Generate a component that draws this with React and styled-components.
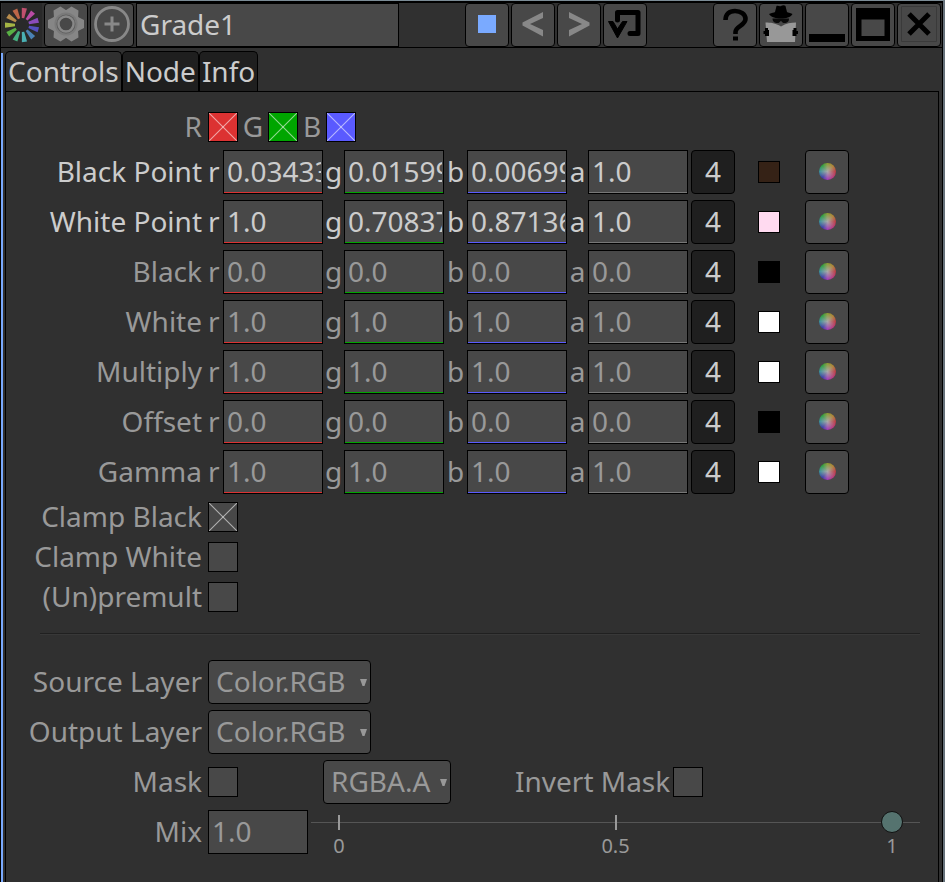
import React, { useState } from "react";
import styled, { createGlobalStyle } from "styled-components";

const c = {
  bg: "#303030",
  field: "#484848",
  dark: "#1f1f1f",
  bright: "#cccccc",
  muted: "#999999",
  red: "#dc3232",
  green: "#00a500",
  blue: "#5a5aff",
  accent: "#7aaaff",
};

const GlobalStyle = createGlobalStyle`
  * { box-sizing: border-box; }
  body { margin: 0; background: ${c.bg}; }
  button, input, select { font: inherit; color: inherit; margin: 0; }
`;

const Window = styled.main`
  display: flex;
  flex-direction: column;
  min-height: 100vh;
  background: ${c.bg};
  color: ${c.muted};
  font-family: "Noto Sans", sans-serif;
  font-size: 28px;
  line-height: 38px;
  border-top: 1px solid #7c8c96;
  border-right: 2px solid #66717a;
  white-space: nowrap;
`;

const Frame = styled.div`
  flex: 1;
  display: flex;
  flex-direction: column;
  border: solid #000;
  border-width: 2px 1px 0 1px;
`;

const Toolbar = styled.header`
  display: flex;
  gap: 2px;
  height: 45px;
  padding: 0 1px;
  border-bottom: 1px solid #000;
`;

const Spacer = styled.div`
  flex: 1;
`;

const Logo = styled.div`
  width: 40px;
  height: 44px;
  background: #292929;
`;

const Button = styled.button`
  display: flex;
  align-items: center;
  justify-content: center;
  width: 44px;
  height: 44px;
  padding: 0 0 2px;
  border: 1px solid #000;
  border-radius: 4px;
  background: ${(p) => (p.$dark ? c.dark : c.field)};
  color: ${c.bright};
`;

const NameField = styled.input`
  flex: 0 1 263px;
  min-width: 80px;
  height: 44px;
  padding: 0 3px 2px;
  border: 1px solid #000;
  border-radius: 0;
  outline: none;
  background: ${c.field};
  && { color: ${c.bright}; }
`;

const Body = styled.div`
  flex: 1;
  display: flex;
`;

const FocusStripe = styled.div`
  width: 2px;
  margin-top: 5px;
  margin-right: 2px;
  background: ${c.accent};
`;

const Column = styled.div`
  flex: 1;
  display: flex;
  flex-direction: column;
  padding-top: 3px;
  padding-right: 3px;
`;

const Tabs = styled.nav`
  display: flex;
`;

const Tab = styled.button`
  height: 40px;
  padding: 0 2px 2px;
  line-height: 36px;
  border: 1px solid #000;
  border-bottom: 0;
  border-radius: 5px 5px 0 0;
  background: ${(p) => (p.$active ? c.bg : c.dark)};
  && { color: ${c.bright}; }
`;

const Panel = styled.section`
  flex: 1;
  padding: 20px 18px 24px 0;
  border: 1px solid #000;
  border-bottom: 0;
`;

const Group = styled.div`
  display: flex;
  flex-direction: column;
  gap: ${(p) => p.$gap}px;
  margin-bottom: ${(p) => p.$after}px;
`;

const Row = styled.div`
  display: flex;
  align-items: center;
  height: ${(p) => (p.$short ? 30 : 44)}px;
  color: ${(p) => (p.$bright ? c.bright : c.muted)};
`;

const Caption = styled.label`
  width: 202px;
  padding: 0 6px 2px 0;
  text-align: right;
`;

const Letter = styled.label`
  width: ${(p) => p.$w}px;
  padding-bottom: 2px;
  text-align: ${(p) => p.$align || "center"};
`;

const NumberField = styled.input`
  width: 100px;
  height: 44px;
  padding: 0 1px 2px 3px;
  border: 1px solid #000;
  border-radius: 0;
  outline: none;
  background: ${c.field};
  box-shadow: ${(p) => (p.$line ? `inset 0 -1px ${p.$line}` : "none")};
`;

const ChannelCount = styled(Button)`
  margin-left: 3px;
`;

const SwatchCell = styled.div`
  display: flex;
  justify-content: center;
  width: 70px;
  padding-right: 2px;
`;

const Swatch = styled.button`
  width: 22px;
  height: 22px;
  padding: 0;
  border: 1px solid #000;
  background: ${(p) => p.$color};
`;

const Wheel = styled.span`
  width: 17px;
  height: 17px;
  border-radius: 50%;
  background:
    radial-gradient(circle, #a8a8a8 0%, #a0a0a000 70%),
    conic-gradient(#8a9a30, #b08030 45deg, #c03840 90deg, #b83880 140deg, #a038b8 180deg, #3838a8 220deg, #38909a 270deg, #28a038 320deg, #8a9a30);
`;

const Check = styled.input`
  appearance: none;
  flex: none;
  width: 30px;
  height: 30px;
  border: 1px solid #000;
  background-color: ${(p) => p.$color || c.field};
  &:checked {
    background-image:
      linear-gradient(to top right, transparent calc(50% - 1px), #ffffff88 50%, transparent calc(50% + 1px)),
      linear-gradient(to bottom right, transparent calc(50% - 1px), #ffffff88 50%, transparent calc(50% + 1px));
  }
`;

const Divider = styled.hr`
  height: 2px;
  margin: 0 0 25px 34px;
  border: 0;
  border-top: 1px solid #202020;
  background: #383838;
`;

const SelectBox = styled.div`
  display: grid;
  align-items: center;
  width: ${(p) => p.$w}px;
  & > * { grid-area: 1 / 1; }
  & > svg { justify-self: end; margin-right: 4px; pointer-events: none; }
`;

const Select = styled.select`
  appearance: none;
  height: 44px;
  padding: 0 12px 2px 7px;
  border: 1px solid #000;
  border-radius: 4px;
  outline: none;
  background: ${c.field};
`;

const MaskCell = styled.div`
  width: 115px;
  display: flex;
`;

const InvertLabel = styled.label`
  margin-left: 64px;
  padding: 0 3px 2px 0;
`;

const Slider = styled.div`
  flex: 1;
  display: grid;
  margin-left: 3px;
  height: 48px;
  background: linear-gradient(#555, #555) 0 14px / 100% 1px no-repeat;
  & > * { grid-area: 1 / 1; }
`;

const Ticks = styled.div`
  display: flex;
  justify-content: space-between;
  padding: 0 8px;
  margin-top: 7px;
`;

const Tick = styled.span`
  width: 40px;
  text-align: center;
  font-size: 20px;
  line-height: 32px;
  &::before {
    content: "";
    display: block;
    width: 2px;
    height: 15px;
    margin: 0 auto;
    background: ${c.muted};
  }
`;

const Range = styled.input`
  appearance: none;
  height: 22px;
  margin: 3px 17px 0 !important;
  background: transparent;
  outline: none;
  z-index: 1;
  &::-webkit-slider-thumb {
    appearance: none;
    width: 22px;
    height: 22px;
    border: 1px solid #101010;
    border-radius: 50%;
    background: #55736f;
  }
`;

const spokes = ["#c0506e", "#b84ba4", "#8a4cbc", "#5450c0", "#4a82b4", "#4ab0b4", "#46b080", "#58b044", "#a4b444", "#b88c4c", "#bc6648"];

function LogoIcon() {
  return (
    <svg width="40" height="44" viewBox="0 0 40 44" aria-hidden="true">
      {spokes.map((color, i) => (
        <path key={color} d="M-1.2 -7 L-2.6 -17 H2.6 L1.2 -7 Z" fill={color} transform={`translate(20 22) rotate(${8 + (i * 360) / 11})`} />
      ))}
    </svg>
  );
}

function Icon({ children }) {
  return <svg width="42" height="42" viewBox="0 0 42 42" fill="none" aria-hidden="true">{children}</svg>;
}

const toothAngles = [0, 60, 120, 180, 240, 300];
const GearIcon = () => (
  <Icon>
    <g transform="translate(21 21)">
      <g fill="#868686">
        <circle r="14" />
        {toothAngles.map((a) => <path key={a} d="M-7.5 -11 L-4 -18 H4 L7.500 -11 Z" transform={`rotate(${a + 30})`} />)}
      </g>
      <circle r="11.500" fill="#7a7a7a" />
      <circle r="9.500" fill="#5c5c5c" />
      <circle r="7.5" fill="#484848" stroke="#888" strokeWidth="2.400" />
    </g>
  </Icon>
);

const AddIcon = () => (
  <Icon>
    <circle cx="21" cy="21" r="16.5" stroke="#888" strokeWidth="2.8" />
    <path d="M21 13.5v15M13.5 21h15" stroke="#888" strokeWidth="3" />
  </Icon>
);
const StopIcon = () => <Icon><path d="M12 12h18v18H12z" fill={c.accent} /></Icon>;
const PrevIcon = () => <Icon><path d="M31 9v6L18 21l13 6v6.500L10.500 22.500v-3z" fill="#888" /></Icon>;
const NextIcon = () => <Icon><path d="M11 9v6L24 21l-13 6v6.500L31.500 22.500v-3z" fill="#888" /></Icon>;
const RevertIcon = () => (
  <Icon>
    <path d="M13.500 17V9.500H34V30.500H26" stroke="#000" strokeWidth="5" strokeLinejoin="round" strokeLinecap="round" />
    <path d="M4.500 18.500H9L13.500 26 18.500 18.500H23L13.500 35Z" fill="#000" stroke="#000" strokeLinejoin="round" />
  </Icon>
);
const HelpIcon = () => (
  <Icon>
    <path d="M11.500 17c0-6 4-9 9.500-9s10.500 3 10.500 8c0 6.500-10 7-10 13v2" stroke="#000" strokeWidth="4.600" />
    <path d="M19 33.500h5v4h-5z" fill="#000" />
  </Icon>
);
const SpyIcon = () => (
  <Icon>
    <path d="M9 11c3-1 5-1.500 6-2l1.500-6c1.500-1 3 1 4.500 0s3.500-1 4.500 0l1.500 6c1 .5 3 1 5.500 2-2 3.500-6.500 4.500-11.500 4.500S11.500 14.500 9 11z" fill="#000" />
    <path d="M12.500 15.500h16.500c0 4-3 5-5.500 4.500-1.500-.5-2-2-2.500-2s-1.500 1.500-2.500 2c-3 .5-6-1-6-4.500z" fill="#0a0a0a" />
    <path d="M5.500 19.500c5 0 10 .5 15.500 4 5-3.500 10-4 15-4L35 39H7z" fill="#989898" />
    <path d="M5 25h3v2h1v6H5v-2H3.500v-3H5zM36.500 25h-3v2h-1v6h4v-2H38v-3h-1.500z" fill="#000" />
  </Icon>
);
const MinimizeIcon = () => <Icon><path d="M3 31h36v8H3z" fill="#000" /></Icon>;
const MaximizeIcon = () => <Icon><path d="M4 5h34v33H4zM9.500 16.500v16.500h23V16.500z" fill="#000" fillRule="evenodd" /></Icon>;
const CloseIcon = () => (
  <Icon>
    <path d="M3.500 3.500h35v35h-35z" stroke="#3a3a3a" />
    <path d="M11 11l20 20M31 11L11 31" stroke="#000" strokeWidth="5" />
  </Icon>
);

const channels = [
  { name: "r", w: 15, line: c.red, align: "left" },
  { name: "g", w: 21, line: c.green },
  { name: "b", w: 23, line: c.blue },
  { name: "a", w: 21, line: "#777" },
];

const zeros = ["0.0", "0.0", "0.0", "0.0"];
const ones = ["1.0", "1.0", "1.0", "1.0"];
const knobs = [
  { label: "Black Point", values: ["0.03433", "0.01599", "0.00699", "1.0"], color: "#352216", bright: true },
  { label: "White Point", values: ["1.0", "0.70837", "0.87136", "1.0"], color: "#ffdaf0", bright: true },
  { label: "Black", values: zeros, color: "#000" },
  { label: "White", values: ones, color: "#fff" },
  { label: "Multiply", values: ones, color: "#fff" },
  { label: "Offset", values: zeros, color: "#000" },
  { label: "Gamma", values: ones, color: "#fff" },
];

function ColorRow({ label, values, color, bright }) {
  const id = label.replace(" ", "-");
  return (
    <Row $bright={bright}>
      <Caption htmlFor={`${id}-r`}>{label}</Caption>
      {channels.map((ch, i) => (
        <React.Fragment key={ch.name}>
          <Letter htmlFor={`${id}-${ch.name}`} $w={ch.w} $align={ch.align}>{ch.name}</Letter>
          <NumberField id={`${id}-${ch.name}`} $line={ch.line} defaultValue={values[i]} />
        </React.Fragment>
      ))}
      <ChannelCount $dark>4</ChannelCount>
      <SwatchCell><Swatch $color={color} aria-label={`${label} color`} /></SwatchCell>
      <Button aria-label={`${label} color wheel`}><Wheel /></Button>
    </Row>
  );
}

function CheckRow({ label, checked }) {
  return (
    <Row $short>
      <Caption htmlFor={label}>{label}</Caption>
      <Check id={label} type="checkbox" defaultChecked={checked} />
    </Row>
  );
}

function Dropdown({ id, value, label, width }) {
  return (
    <SelectBox $w={width}>
      <Select id={id} aria-label={label} defaultValue={value}><option>{value}</option></Select>
      <svg width="7" height="7" viewBox="0 0 7 7" aria-hidden="true"><path d="M0 0h7L4.500 7h-2z" fill={c.muted} /></svg>
    </SelectBox>
  );
}

export default function App() {
  const [mix, setMix] = useState(1);
  const [tab, setTab] = useState("Controls");
  return (
    <Window>
      <GlobalStyle />
      <Frame>
        <Toolbar>
          <Logo><LogoIcon /></Logo>
          <Button aria-label="Settings"><GearIcon /></Button>
          <Button aria-label="Add"><AddIcon /></Button>
          <NameField aria-label="Node name" defaultValue="Grade1" />
          <Spacer />
          <Button aria-label="Node color"><StopIcon /></Button>
          <Button aria-label="Undo"><PrevIcon /></Button>
          <Button aria-label="Redo"><NextIcon /></Button>
          <Button aria-label="Reset"><RevertIcon /></Button>
          <Spacer />
          <Button aria-label="Help"><HelpIcon /></Button>
          <Button aria-label="Hide unmodified"><SpyIcon /></Button>
          <Button aria-label="Minimize"><MinimizeIcon /></Button>
          <Button aria-label="Maximize"><MaximizeIcon /></Button>
          <Button aria-label="Close"><CloseIcon /></Button>
        </Toolbar>
        <Body>
          <FocusStripe />
          <Column>
            <Tabs>
              {["Controls", "Node", "Info"].map((t) => (
                <Tab key={t} $active={t === tab} onClick={() => setTab(t)}>{t}</Tab>
              ))}
            </Tabs>
            <Panel>
              <Group $gap={0} $after={8}>
                <Row $short>
                  <Caption htmlFor="proc-r">R</Caption>
                  <Check id="proc-r" type="checkbox" $color={c.red} defaultChecked />
                  <Letter htmlFor="proc-g" $w={30}>G</Letter>
                  <Check id="proc-g" type="checkbox" $color={c.green} defaultChecked />
                  <Letter htmlFor="proc-b" $w={28}>B</Letter>
                  <Check id="proc-b" type="checkbox" $color={c.blue} defaultChecked />
                </Row>
              </Group>
              <Group $gap={6} $after={8}>
                {knobs.map((k) => <ColorRow key={k.label} {...k} />)}
              </Group>
              <Group $gap={10} $after={21}>
                <CheckRow label="Clamp Black" checked />
                <CheckRow label="Clamp White" />
                <CheckRow label="(Un)premult" />
              </Group>
              <Divider />
              <Group $gap={6} $after={0}>
                <Row>
                  <Caption htmlFor="source">Source Layer</Caption>
                  <Dropdown id="source" value="Color.RGB" width={163} />
                </Row>
                <Row>
                  <Caption htmlFor="output">Output Layer</Caption>
                  <Dropdown id="output" value="Color.RGB" width={163} />
                </Row>
                <Row>
                  <Caption htmlFor="mask">Mask</Caption>
                  <MaskCell><Check id="mask" type="checkbox" /></MaskCell>
                  <Dropdown id="mask-channel" label="Mask channel" value="RGBA.A" width={128} />
                  <InvertLabel htmlFor="invert">Invert Mask</InvertLabel>
                  <Check id="invert" type="checkbox" />
                </Row>
                <Row>
                  <Caption htmlFor="mix">Mix</Caption>
                  <NumberField id="mix" value={Number(mix).toFixed(1)} onChange={(e) => setMix(Number(e.target.value) || 0)} />
                  <Slider>
                    <Ticks><Tick>0</Tick><Tick>0.5</Tick><Tick>1</Tick></Ticks>
                    <Range type="range" aria-label="Mix amount" min="0" max="1" step="0.01" value={mix} onChange={(e) => setMix(e.target.value)} />
                  </Slider>
                </Row>
              </Group>
            </Panel>
          </Column>
        </Body>
      </Frame>
    </Window>
  );
}
